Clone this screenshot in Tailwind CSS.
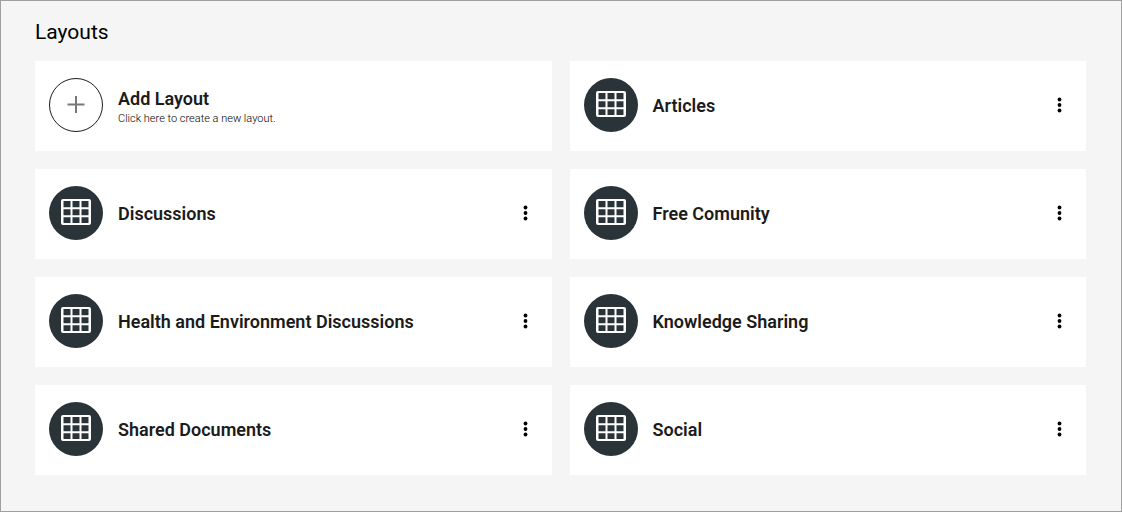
<!DOCTYPE html>
<html lang="en">
<head>
<meta charset="utf-8">
<title>Layouts</title>
<script src="https://cdn.jsdelivr.net/npm/@tailwindcss/browser@4"></script>
</head>
<body class="min-h-screen border border-[#a0a0a0] bg-[#f5f5f5] font-[Roboto,sans-serif] text-[#1b1b1b]">
<svg class="hidden" aria-hidden="true">
  <symbol id="grid" viewBox="0 0 30 26">
    <path fill="#fff" fill-rule="evenodd" d="M2 0h26a2 2 0 0 1 2 2v22a2 2 0 0 1-2 2H2a2 2 0 0 1-2-2V2a2 2 0 0 1 2-2zM2.5 2v6.3h7V2zM11.5 2v6.3h7V2zM20.5 2v6.3h7V2zM2.5 10.3v6h7v-6zM11.5 10.3v6h7v-6zM20.5 10.3v6h7v-6zM2.5 18.3v5.7h7v-5.7zM11.5 18.3v5.7h7v-5.7zM20.5 18.3v5.7h7v-5.7z"/>
  </symbol>
  <symbol id="dots" viewBox="0 0 5 16">
    <circle cx="2.5" cy="2.5" r="1.9"/><circle cx="2.5" cy="8" r="1.9"/><circle cx="2.5" cy="13.5" r="1.9"/>
  </symbol>
</svg>
<main class="pt-[19px] pr-[35px] pl-[34px]">
  <h1 class="text-[21px] leading-6 text-black">Layouts</h1>
  <ul class="mt-[17px] grid grid-cols-2 gap-[18px]">
    <li class="h-[90px] bg-white">
      <button type="button" class="flex h-full w-full items-center gap-[15px] pr-6 pb-0.5 pl-3.5 text-left">
        <span class="flex size-[54px] shrink-0 items-center justify-center rounded-full border border-[#1b1b1b]">
          <svg class="size-[18px]" viewBox="0 0 18 18" aria-hidden="true"><path fill="#777" d="M8 0h2v7.5h7.5v2H10v7.5H8V9.500H.5v-2H8z"/></svg>
        </span>
        <span class="flex flex-col pt-1">
          <span class="text-lg leading-6 font-semibold">Add Layout</span>
          <span class="text-[11px] leading-4 font-light text-black">Click here to create a new layout.</span>
        </span>
      </button>
    </li>
    <li class="flex h-[90px] items-center gap-[15px] bg-white pr-6 pb-0.5 pl-3.5">
      <span class="flex size-[54px] shrink-0 items-center justify-center rounded-full bg-[#293338] pb-0.5"><svg class="h-[26px] w-[30px]" aria-hidden="true"><use href="#grid"/></svg></span>
      <h2 class="grow pt-0.5 text-lg leading-6 font-semibold">Articles</h2>
      <button type="button" aria-label="Options for Articles"><svg class="h-4 w-[5px]"><use href="#dots"/></svg></button>
    </li>
    <li class="flex h-[90px] items-center gap-[15px] bg-white pr-6 pb-0.5 pl-3.5">
      <span class="flex size-[54px] shrink-0 items-center justify-center rounded-full bg-[#293338] pb-0.5"><svg class="h-[26px] w-[30px]" aria-hidden="true"><use href="#grid"/></svg></span>
      <h2 class="grow pt-0.5 text-lg leading-6 font-semibold">Discussions</h2>
      <button type="button" aria-label="Options for Discussions"><svg class="h-4 w-[5px]"><use href="#dots"/></svg></button>
    </li>
    <li class="flex h-[90px] items-center gap-[15px] bg-white pr-6 pb-0.5 pl-3.5">
      <span class="flex size-[54px] shrink-0 items-center justify-center rounded-full bg-[#293338] pb-0.5"><svg class="h-[26px] w-[30px]" aria-hidden="true"><use href="#grid"/></svg></span>
      <h2 class="grow pt-0.5 text-lg leading-6 font-semibold">Free Comunity</h2>
      <button type="button" aria-label="Options for Free Comunity"><svg class="h-4 w-[5px]"><use href="#dots"/></svg></button>
    </li>
    <li class="flex h-[90px] items-center gap-[15px] bg-white pr-6 pb-0.5 pl-3.5">
      <span class="flex size-[54px] shrink-0 items-center justify-center rounded-full bg-[#293338] pb-0.5"><svg class="h-[26px] w-[30px]" aria-hidden="true"><use href="#grid"/></svg></span>
      <h2 class="grow pt-0.5 text-lg leading-6 font-semibold">Health and Environment Discussions</h2>
      <button type="button" aria-label="Options for Health and Environment Discussions"><svg class="h-4 w-[5px]"><use href="#dots"/></svg></button>
    </li>
    <li class="flex h-[90px] items-center gap-[15px] bg-white pr-6 pb-0.5 pl-3.5">
      <span class="flex size-[54px] shrink-0 items-center justify-center rounded-full bg-[#293338] pb-0.5"><svg class="h-[26px] w-[30px]" aria-hidden="true"><use href="#grid"/></svg></span>
      <h2 class="grow pt-0.5 text-lg leading-6 font-semibold">Knowledge Sharing</h2>
      <button type="button" aria-label="Options for Knowledge Sharing"><svg class="h-4 w-[5px]"><use href="#dots"/></svg></button>
    </li>
    <li class="flex h-[90px] items-center gap-[15px] bg-white pr-6 pb-0.5 pl-3.5">
      <span class="flex size-[54px] shrink-0 items-center justify-center rounded-full bg-[#293338] pb-0.5"><svg class="h-[26px] w-[30px]" aria-hidden="true"><use href="#grid"/></svg></span>
      <h2 class="grow pt-0.5 text-lg leading-6 font-semibold">Shared Documents</h2>
      <button type="button" aria-label="Options for Shared Documents"><svg class="h-4 w-[5px]"><use href="#dots"/></svg></button>
    </li>
    <li class="flex h-[90px] items-center gap-[15px] bg-white pr-6 pb-0.5 pl-3.5">
      <span class="flex size-[54px] shrink-0 items-center justify-center rounded-full bg-[#293338] pb-0.5"><svg class="h-[26px] w-[30px]" aria-hidden="true"><use href="#grid"/></svg></span>
      <h2 class="grow pt-0.5 text-lg leading-6 font-semibold">Social</h2>
      <button type="button" aria-label="Options for Social"><svg class="h-4 w-[5px]"><use href="#dots"/></svg></button>
    </li>
  </ul>
</main>
</body>
</html>
